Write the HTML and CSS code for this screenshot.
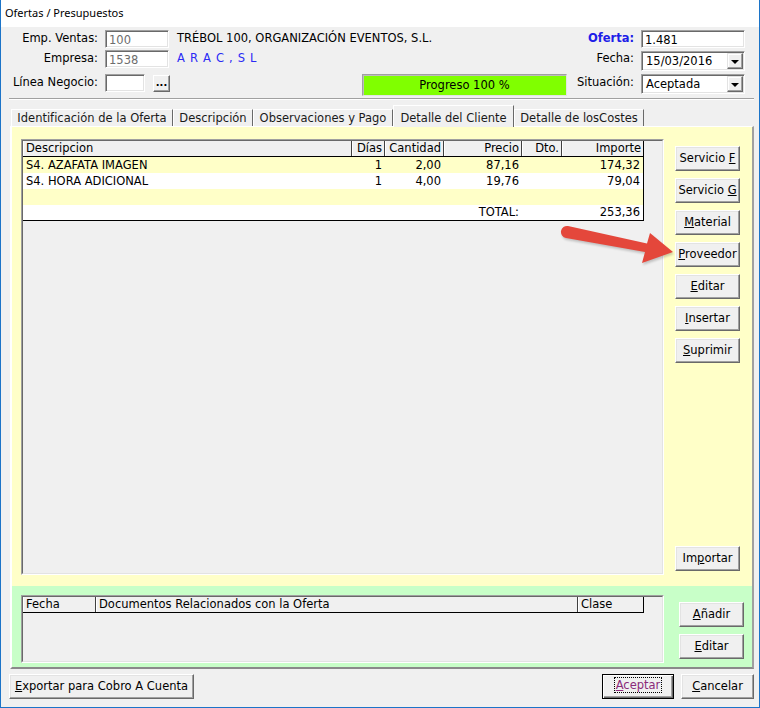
FILE: index.html
```html
<!DOCTYPE html>
<html lang="es">

<head>
    <meta charset="UTF-8">
    <link rel="stylesheet" href="styles.css">
    <title>Ofertas / Presupuestos</title>
</head>

<body>
    <div class="window">
        <div class="titlebar">Ofertas / Presupuestos</div>
        <div class="client">
            <div class="header">
                <span class="lbl">Emp. Ventas:</span>
                <span class="field dis">100</span>
                <span class="info">TRÉBOL 100, ORGANIZACIÓN EVENTOS, S.L.</span>
                <span class="lbl oferta">Oferta:</span>
                <span class="field">1.481</span>

                <span class="lbl">Empresa:</span>
                <span class="field dis">1538</span>
                <span class="info blue">A R A C , S L</span>
                <span class="lbl">Fecha:</span>
                <span class="combo low"><span class="val">15/03/2016</span><span class="drop"><i></i></span></span>

                <span class="lbl">Línea Negocio:</span>
                <div class="row3">
                    <span class="field short"></span>
                    <span class="dots">...</span>
                    <div class="progress">Progreso 100 %</div>
                </div>
                <span class="lbl">Situación:</span>
                <span class="combo"><span class="val">Aceptada</span><span class="drop"><i></i></span></span>
            </div>

            <div class="sep"></div>

            <div class="tabs">
                <div class="tab t1">Identificación de la Oferta</div>
                <div class="tab t2">Descripción</div>
                <div class="tab t3">Observaciones y Pago</div>
                <div class="tab t4 active">Detalle del Cliente</div>
                <div class="tab t5">Detalle de losCostes</div>
            </div>

            <div class="panel">
                <div class="detail">
                    <div class="grid big">
                        <div class="grid-in">
                            <div class="lines">
                                <div class="row head">
                                    <span>Descripcion</span>
                                    <span class="num">Días</span>
                                    <span class="num">Cantidad</span>
                                    <span class="num">Precio</span>
                                    <span class="num">Dto.</span>
                                    <span class="num">Importe</span>
                                </div>
                                <div class="row y">
                                    <span>S4. AZAFATA IMAGEN</span>
                                    <span class="num">1</span>
                                    <span class="num">2,00</span>
                                    <span class="num">87,16</span>
                                    <span class="num"></span>
                                    <span class="num">174,32</span>
                                </div>
                                <div class="row w">
                                    <span>S4. HORA ADICIONAL</span>
                                    <span class="num">1</span>
                                    <span class="num">4,00</span>
                                    <span class="num">19,76</span>
                                    <span class="num"></span>
                                    <span class="num">79,04</span>
                                </div>
                                <div class="row y">
                                    <span></span><span></span><span></span><span></span><span></span><span></span>
                                </div>
                                <div class="row w last">
                                    <span></span>
                                    <span></span>
                                    <span></span>
                                    <span class="num">TOTAL:</span>
                                    <span></span>
                                    <span class="num">253,36</span>
                                </div>
                            </div>
                        </div>
                    </div>
                    <div class="side">
                        <div class="btn">Servicio <u>F</u></div>
                        <div class="btn">Servicio <u>G</u></div>
                        <div class="btn"><u>M</u>aterial</div>
                        <div class="btn"><u>P</u>roveedor</div>
                        <div class="btn"><u>E</u>ditar</div>
                        <div class="btn"><u>I</u>nsertar</div>
                        <div class="btn"><u>S</u>uprimir</div>
                        <div class="btn bottom">Im<u>p</u>ortar</div>
                    </div>
                </div>
                <div class="docs">
                    <div class="grid small">
                        <div class="grid-in">
                            <div class="lines">
                                <div class="row head docs-head">
                                    <span>Fecha</span>
                                    <span>Documentos Relacionados con la Oferta</span>
                                    <span>Clase</span>
                                </div>
                            </div>
                        </div>
                    </div>
                    <div class="side green-side">
                        <div class="btn"><u>A</u>ñadir</div>
                        <div class="btn"><u>E</u>ditar</div>
                    </div>
                </div>
            </div>

            <div class="footer">
                <div class="btn export"><u>E</u>xportar para Cobro A Cuenta</div>
                <div class="btn ok"><span class="focus"><u>A</u>ceptar</span></div>
                <div class="btn cancel"><u>C</u>ancelar</div>
            </div>
        </div>

        <svg class="arrow" width="120" height="50" viewBox="560 220 120 50">
            <path d="M568,226 L647,243.5 L650,233 L673,252 L642,263 L645,252 L566,238 A6,6 0 0,1 568,226 Z" fill="#e4473b" />
        </svg>
    </div>
</body>

</html>
```

FILE: styles.css
```css
* {
    box-sizing: border-box;
}

body {
    margin: 0;
    font-family: "DejaVu Sans", sans-serif;
    font-size: 11.5px;
    color: #000;
}

.window {
    width: 760px;
    height: 708px;
    border: 1px solid #1c74c8;
    border-top: 0;
    background: #f0f0f0;
    display: flex;
    flex-direction: column;
    position: relative;
}

.titlebar {
    height: 27px;
    background: #fff;
    font-family: "Noto Sans", sans-serif;
    font-size: 11px;
    line-height: 26px;
    padding-left: 4px;
}

.client {
    flex: 1;
    display: flex;
    flex-direction: column;
}

/* cabecera */
.header {
    display: grid;
    grid-template-columns: 88px 64px 1fr 60px 104px;
    grid-template-rows: 20px 24px 22px;
    column-gap: 7px;
    padding: 3px 14px 0 9px;
    align-items: start;
}

.lbl {
    text-align: right;
    line-height: 16px;
    white-space: nowrap;
}

.lbl.oferta {
    color: #1d1de8;
    font-weight: bold;
}

.info {
    line-height: 16px;
    white-space: nowrap;
    padding-left: 1px;
}

.info.blue {
    color: #2b2bf5;
    letter-spacing: 0.7px;
}

.field {
    height: 18px;
    background: #fff;
    border: 1px solid;
    border-color: #a0a0a0 #fff #fff #a0a0a0;
    box-shadow: inset 1px 1px #696969, inset -1px -1px #e3e3e3;
    padding: 2px 0 0 3px;
    line-height: 14px;
}

.field.dis {
    color: #6d6d6d;
}

.field.short {
    width: 40px;
}

.combo {
    height: 20px;
    background: #fff;
    border: 1px solid;
    border-color: #a0a0a0 #fff #fff #a0a0a0;
    box-shadow: inset 1px 1px #696969, inset -1px -1px #e3e3e3;
    padding: 1px;
    display: flex;
}

.combo.low {
    margin-top: 1px;
}

.combo .val {
    flex: 1;
    padding: 1px 0 0 3px;
    line-height: 15px;
}

.drop {
    width: 16px;
    height: 16px;
    background: #f0f0f0;
    border: 1px solid;
    border-color: #e3e3e3 #696969 #696969 #e3e3e3;
    box-shadow: inset -1px -1px #a0a0a0, inset 1px 1px #fff;
    display: flex;
    align-items: center;
    justify-content: center;
}

.drop i {
    width: 0;
    height: 0;
    border-left: 4px solid transparent;
    border-right: 4px solid transparent;
    border-top: 4px solid #000;
    margin-top: 1px;
}

.row3 {
    grid-column: 2 / 4;
    display: flex;
    align-items: flex-start;
}

.dots {
    width: 17px;
    height: 17px;
    margin: 1px 0 0 8px;
    background: #f0f0f0;
    border: 1px solid;
    border-color: #fff #696969 #696969 #fff;
    box-shadow: inset -1px -1px #a0a0a0;
    font-weight: bold;
    font-size: 10px;
    line-height: 13px;
    text-align: center;
}

.progress {
    margin-left: auto;
    width: 205px;
    height: 22px;
    background: #80ff00;
    border: 1px solid;
    border-color: #a0a0a0 #e3e3e3 #e3e3e3 #a0a0a0;
    box-shadow: inset 1px 1px #bcbcbc;
    text-align: center;
    line-height: 20px;
}

.sep {
    height: 2px;
    margin: 2px 5px 0 8px;
    border-top: 1px solid #a0a0a0;
    border-bottom: 1px solid #fff;
}

/* pestañas */
.tabs {
    height: 26px;
    display: flex;
    align-items: flex-end;
    padding-left: 10px;
    position: relative;
    z-index: 1;
}

.tab {
    height: 17px;
    border-top: 1px solid #fff;
    border-left: 1px solid #fff;
    border-right: 1px solid #696969;
    text-align: center;
    line-height: 17px;
    white-space: nowrap;
    color: #1a1a1a;
}

.t1 { width: 162px; }
.t2 { width: 80px; }
.t3 { width: 140px; }
.t4 { width: 121px; }
.t5 { width: 130px; }

.tab.active {
    height: 22px;
    margin-bottom: -1px;
    background: #f0f0f0;
    padding-top: 4px;
}

.panel {
    height: 543px;
    margin: 0 5px 0 9px;
    border-style: solid;
    border-width: 1px 2px 2px 2px;
    border-color: #fff #a0a0a0 #8a8a8a #fff;
}

.detail {
    height: 459px;
    background: #ffffc8;
    display: flex;
    padding: 12px 0 11px 9px;
}

.docs {
    height: 81px;
    background: #c8ffc8;
    display: flex;
    padding: 9px 0 4px 9px;
}

.grid {
    width: 643px;
    flex: none;
    background: #f0f0f0;
    border: 1px solid;
    border-color: #a0a0a0 #fff #fff #a0a0a0;
}

.grid-in {
    height: 100%;
    border: 1px solid;
    border-color: #696969 #e3e3e3 #e3e3e3 #696969;
}

.lines {
    width: 621px;
}

.row {
    display: grid;
    grid-template-columns: 329px 33px 59px 78px 40px 81px;
    height: 16px;
    line-height: 16px;
    border-right: 1px solid #000;
    white-space: nowrap;
}

.row span {
    padding: 0 3px;
    overflow: hidden;
}

.row .num {
    text-align: right;
}

.row.head {
    background: #f0f0f0;
    border-bottom: 1px solid #000;
    line-height: 15px;
}

.row.head span {
    border-left: 1px solid #fff;
    border-right: 1px solid #404040;
    padding: 0 2px;
}

.row.head span:last-child {
    border-right: 0;
}

.row.head.docs-head {
    grid-template-columns: 73px 482px 65px;
}

.row.y {
    background: #ffffc8;
}

.row.w {
    background: #fff;
}

.row.last {
    border-bottom: 1px solid #000;
    line-height: 15px;
}

/* botones */
.side {
    width: 65px;
    margin-left: 11px;
    display: flex;
    flex-direction: column;
    gap: 7px;
    padding: 7px 0 4px;
}

.green-side {
    margin-left: 15px;
    padding-top: 7px;
}

.btn {
    height: 25px;
    background: #f0f0f0;
    border: 1px solid;
    border-color: #fff #696969 #696969 #fff;
    box-shadow: inset -1px -1px #a0a0a0, inset 1px 1px #e3e3e3;
    text-align: center;
    line-height: 22px;
    white-space: nowrap;
}

.btn.bottom {
    margin-top: auto;
}

.footer {
    display: flex;
    padding: 5px 5px 0 8px;
}

.btn.export {
    width: 185px;
}

.btn.ok {
    width: 72px;
    margin-left: auto;
    border-color: #000;
    box-shadow: inset 1px 1px #fff, inset -1px -1px #696969, inset -2px -2px #a0a0a0;
    color: #8a2a7a;
    line-height: 21px;
}

.btn.ok .focus {
    display: inline-block;
    outline: 1px dotted #000;
    line-height: 14px;
    padding: 0 1px;
    margin-top: 3px;
}

.btn.cancel {
    width: 73px;
    margin-left: 7px;
}

.arrow {
    position: absolute;
    left: 559px;
    top: 220px;
    filter: drop-shadow(1px 2px 1px rgba(0, 0, 0, 0.2));
}
```
